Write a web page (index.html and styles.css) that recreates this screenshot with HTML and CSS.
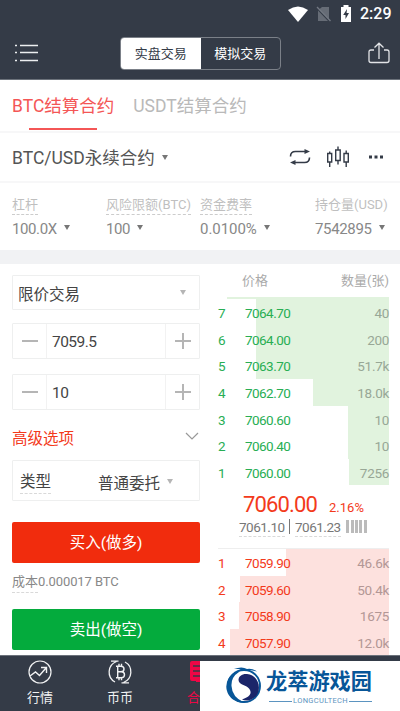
FILE: index.html
```html
<!DOCTYPE html>
<html lang="zh-CN">
<head>
<meta charset="utf-8">
<title>BTC/USD永续合约</title>
<link rel="stylesheet" href="styles.css">
</head>
<body>
<div class="app">
  <header class="header">
    <div class="status">
      <svg width="20" height="16" viewBox="0 0 20 16"><path d="M0 4Q10-3 20 4L10 16Z" fill="#fff"/></svg>
      <svg width="16" height="16" viewBox="0 0 16 16"><path d="M6 1h7v12.500L3 3.500ZM2 4.500l10 10.500H2Z" fill="#666c76"/><path d="M1 1l13.500 14" stroke="#737983" stroke-width="1.300"/></svg>
      <svg width="12" height="17" viewBox="0 0 12 17"><path d="M3.500 0h5v2H11v15H1V2h2.500Z" fill="#fff"/><path d="M7 4L3.200 10H5.500V14L9 8H6.600Z" fill="#343b47"/></svg>
      <span class="clock">2:29</span>
    </div>
    <div class="navbar">
      <svg width="24" height="18" viewBox="0 0 24 18" stroke="#eceef0" stroke-width="1.300"><path d="M0 1.500h2M5 1.500h18M0 8.500h2M5 8.500h18M0 16.500h2M5 16.500h18"/></svg>
      <div class="segment"><span class="seg on">实盘交易</span><span class="seg">模拟交易</span></div>
      <svg width="22" height="22" viewBox="0 0 22 22" fill="none" stroke="#e2e4e7" stroke-width="1.300"><path d="M6 8H3Q1 8 1 10v8.500q0 2 2 2h16q2 0 2-2V10q0-2-2-2h-3M11 17V1.500M6.500 5.500L11 1.200l4.500 4.300"/></svg>
    </div>
  </header>

  <nav class="tabs"><span class="tab active">BTC结算合约</span><span class="tab">USDT结算合约</span></nav>

  <section class="pair">
    <span class="pair-name">BTC/USD永续合约</span><i class="caret small"></i>
    <div class="tools">
      <svg width="22" height="18" viewBox="0 0 22 18" fill="none" stroke="#343b47" stroke-width="1.600"><path d="M1.500 8.500Q1.500 3.500 6.500 3.500H17M20.500 9.500Q20.500 14.500 15.500 14.500H5"/><path d="M15.500 1L21 3.500l-5.500 2.500ZM6.500 12L1 14.500 6.500 17Z" fill="#343b47" stroke="none"/></svg>
      <svg width="22" height="22" viewBox="0 0 22 22" fill="none" stroke="#343b47" stroke-width="1.400"><path d="M.7 7.500h4v8.500h-4ZM8.700 4h4.500v10.500H8.700ZM17 7.500h4.300v8.500H17ZM2.700 5.500v2M2.700 16v5M11 .5V4M11 14.500v4M19.200 4.500v3M19.200 16v5"/></svg>
      <svg width="14" height="4" viewBox="0 0 14 4" fill="#343b47"><path d="M0 .5h3v3H0ZM5.500 .5h3v3h-3ZM11 .5h3v3h-3Z"/></svg>
    </div>
  </section>

  <section class="info">
    <div class="cell"><span class="label dash">杠杆</span><div class="value">100.0X<i class="caret"></i></div></div>
    <div class="cell"><span class="label dash">风险限额(BTC)</span><div class="value">100<i class="caret"></i></div></div>
    <div class="cell"><span class="label dash">资金费率</span><div class="value">0.0100%<i class="caret"></i></div></div>
    <div class="cell"><span class="label">持仓量(USD)</span><div class="value">7542895<i class="caret"></i></div></div>
  </section>

  <main class="trade">
    <div class="form">
      <div class="select">限价交易<i class="caret light"></i></div>
      <div class="stepper price"><span class="step minus"></span><span class="num">7059.5</span><span class="step plus"></span></div>
      <div class="stepper amount"><span class="step minus"></span><span class="num">10</span><span class="step plus"></span></div>
      <div class="advanced">高级选项<svg width="14" height="9" viewBox="0 0 14 9" fill="none" stroke="#999" stroke-width="1.200"><path d="M1 1l6 6 6-6"/></svg></div>
      <div class="type"><span class="type-label dash">类型</span><span class="type-value">普通委托</span><i class="caret light"></i></div>
      <div class="btn buy">买入(做多)</div>
      <div class="cost"><span class="dash">成本</span><span class="cost-num">0.000017 BTC</span></div>
      <div class="btn sell">卖出(做空)</div>
    </div>

    <div class="book">
      <div class="book-head"><span>价格</span><span>数量(张)</span></div>
      <div class="asks">
        <div class="row"><b>7</b><span>7064.70</span><em class="w133">40</em></div>
        <div class="row"><b>6</b><span>7064.00</span><em class="w133">200</em></div>
        <div class="row"><b>5</b><span>7063.70</span><em class="w133">51.7k</em></div>
        <div class="row"><b>4</b><span>7062.70</span><em class="w76">18.0k</em></div>
        <div class="row"><b>3</b><span>7060.60</span><em class="w41">10</em></div>
        <div class="row"><b>2</b><span>7060.40</span><em class="w41">10</em></div>
        <div class="row"><b>1</b><span>7060.00</span><em class="w40">7256</em></div>
      </div>
      <div class="last"><span class="last-price">7060.00</span><span class="change">2.16%</span></div>
      <div class="marks"><span class="dash">7061.10</span><i class="sep"></i><span class="dash">7061.23</span><i class="bars"></i></div>
      <div class="bids">
        <div class="row"><b>1</b><span>7059.90</span><em class="w103">46.6k</em></div>
        <div class="row"><b>2</b><span>7059.60</span><em class="w149">50.4k</em></div>
        <div class="row"><b>3</b><span>7058.90</span><em class="w150">1675</em></div>
        <div class="row"><b>4</b><span>7057.90</span><em class="w159">12.0k</em></div>
      </div>
    </div>
  </main>

  <footer class="tabbar">
    <div class="item"><svg width="24" height="24" viewBox="0 0 24 24" fill="none" stroke="#f1f2f3" stroke-width="1.200"><circle cx="12" cy="12" r="11"/><path d="M2 16l5.500-4 4 3.500L18 8M13 7.500h5.500V13" stroke-width="1.400"/></svg><span>行情</span></div>
    <div class="item"><svg width="26" height="24" viewBox="0 0 26 24" fill="none" stroke="#f1f2f3" stroke-width="1.300"><path d="M11.500 1.200H4M9.500 1.500A11.300 11.300 0 0 0 8 22M14.500 22.800H22M16.500 22.500A11.300 11.300 0 0 0 18 2"/><path d="M9 6.200h5q3 0 3 2.800t-3 2.800h-3.500M14.200 11.800q3.300 0 3.300 3t-3.300 3H9M10.700 6v12M12 3.800V6M14.500 3.800V6M12 18v2.300M14.500 18v2.300" stroke-width="1.400"/></svg><span>币币</span></div>
    <div class="item current"><svg width="22" height="24" viewBox="0 0 22 24"><path d="M3 1h16v18q0 3-3 3H7v-1H3q-2 0-2-2V3q0-2 2-2Z" fill="#ed0746"/><path d="M4 6h12M4 11h12M4 16h12" stroke="#343b47" stroke-width="1.300"/></svg><span>合约</span></div>
  </footer>

  <aside class="brand">
    <svg class="brand-logo" width="36" height="38" viewBox="0 0 36 38"><circle cx="18" cy="20" r="16" fill="none" stroke="#075698" stroke-width="1.900"/><path d="M11 5.500A16 16 0 0 0 18 36.500Q6 31 5.500 20 5 11 13 6Z" fill="#075698"/><path d="M8 3q8-3 13 0 5-1 10 2.500l-7-1.500q-7 0-13 1.500l4-2.500Z" fill="#075698"/><path d="M21 8C34 9 37 27 27 32.500c-4 2.500-8 2.500-11 1 7-2 11-6 7-11-3-4-10-3-10.500-8.500 0-4 4-6.500 8.500-6Z" fill="#1b2569"/></svg>
    <div class="brand-text"><div class="brand-name">龙萃游戏园</div><div class="brand-sub"><span>LONGCULTECH</span></div></div>
  </aside>
</div>
</body>
</html>
```
FILE: styles.css
```css
* { box-sizing: border-box; }
body { margin: 0; background: #fff; }
i, em, b { font-style: normal; font-weight: 400; }
svg { display: block; flex: none; }
.app {
  position: relative;
  width: 400px;
  height: 711px;
  overflow: hidden;
  font-family: Roboto, "Noto Sans CJK SC", sans-serif;
  color: #444;
  white-space: nowrap;
}

.header { height: 80px; background: #343b47; border-bottom: 1px solid #6c727b; }
.status { height: 27px; display: flex; align-items: center; justify-content: flex-end; padding: 0 9px 0 0; color: #fff; }
.status svg + svg { margin-left: 7px; }
.status svg:nth-child(3) { margin-left: 8px; }
.clock { width: 31px; margin-left: 8px; font-size: 16px; font-weight: 500; line-height: 27px; }
.status svg:first-child { margin-right: 1px; }
.navbar { height: 52px; display: flex; align-items: center; padding: 0 10px 0 15px; }
.segment { display: flex; width: 161px; height: 33px; margin: 0 auto 0 81px; border: 1px solid #7b8088; border-radius: 4px; overflow: hidden; }
.seg { flex: 1; text-align: center; font-size: 13px; line-height: 32px; color: #fff; }
.seg.on { background: #fff; color: #343b47; }

.tabs { height: 53px; display: flex; gap: 19px; padding: 0 12px; border-bottom: 2px solid #f7f7f8; }
.tab { position: relative; font-size: 17.500px; line-height: 52px; color: #b9b9b9; }
.tab.active { color: #f45656; }
.tab.active::after { content: ""; position: absolute; left: 17px; top: 48px; width: 68px; height: 2px; background: #f45656; }

.pair { height: 50px; display: flex; align-items: center; padding: 0 17px 0 12px; border-bottom: 2px solid #f7f7f8; }
.pair-name { font-size: 17.500px; line-height: 50px; padding-top: 2px; color: #555; }
.tools { margin-left: auto; display: flex; align-items: center; gap: 16px; }
.tools svg:last-child { margin-left: 4px; }

.caret { display: inline-block; flex: none; width: 0; height: 0; border: 3.500px solid transparent; border-top: 5px solid #777; border-bottom: 0; }
.caret.small { margin-left: 7px; }
.caret.light { border-top-color: #b5b5b5; }
.dash { border-bottom: 1px dashed #d9d9d9; }

.info { height: 67px; display: grid; grid-template-columns: 94px 94px 115px 1fr; padding: 11px 0 0 12px; }
.label { display: inline-block; height: 20px; font-size: 13px; line-height: 20px; color: #bfbfbf; }
.label.dash { border-color: #ccc; }
.value { display: flex; align-items: center; height: 20px; margin-top: 4px; font-size: 15px; line-height: 20px; letter-spacing: -.4px; color: #888; }
.value .caret { margin: -3px 0 0 7px; }
.cell { line-height: 20px; }
.cell:nth-child(3) .value { letter-spacing: -.05px; }
.cell:last-child .value { letter-spacing: -.35px; }

.trade { height: 405px; padding-left: 12px; display: flex; border-top: 14px solid #f1f2f4; }
.form { width: 188px; padding-top: 11px; }
.select, .stepper, .type { border: 1px solid #eeefef; border-radius: 1px; display: flex; align-items: center; }
.select { height: 35px; justify-content: space-between; padding: 0 13px 0 5px; font-size: 15.500px; }
.stepper { height: 36px; }
.price { margin-top: 13px; }
.amount { margin-top: 15px; }
.step { width: 33px; height: 34px; display: grid; place-items: center; }
.step::before, .step::after { content: ""; grid-area: 1 / 1; background: #b5b5b5; }
.step::before { width: 16px; height: 2px; }
.step.plus::after { width: 2px; height: 16px; }
.num { flex: 1; padding-left: 5px; border: solid #f2f2f2; border-width: 0 1px; font-size: 15.500px; line-height: 37px; height: 34px; letter-spacing: -.55px; }
.advanced { height: 50px; display: flex; align-items: center; justify-content: space-between; padding: 3px 1px 0 0; font-size: 15.500px; color: #f33a1b; }
.type { height: 41px; padding: 2px 0 0 7px; font-size: 15.500px; }
.type-label { line-height: 24px; height: 24px; }
.type-value { margin-left: 47px; }
.type .caret { margin-left: 7px; }
.btn { height: 41px; border-radius: 2px; color: #fff; font-size: 15.500px; line-height: 43px; text-align: center; }
.buy { margin-top: 21px; background: #f12c0d; }
.sell { background: #04ab3d; }
.cost { height: 46px; padding-top: 8px; font-size: 13px; line-height: 22px; color: #888; }
.cost .dash { display: inline-block; line-height: 22px; height: 22px; }
.cost-num { letter-spacing: -.1px; }

.book { width: 171px; margin-left: 18px; }
.book-head { height: 33px; display: flex; justify-content: space-between; padding-left: 24px; font-size: 13px; line-height: 34px; color: #aaa; }
.asks { border-top: 2px solid #e1f3de; margin-left: 9px; }
.asks .row { margin-left: -9px; }
.row { display: grid; grid-template-columns: 1fr; height: 26.650px; line-height: 29px; font-size: 13.500px; }
.row > * { grid-area: 1 / 1; }
.row b, .row span { z-index: 1; }
.row span { padding-left: 27px; letter-spacing: -.55px; }
.row em { justify-self: end; text-align: right; height: 26.650px; letter-spacing: -.3px; }
.asks b, .asks span { color: #28ae54; }
.bids b, .bids span { color: #f33a1b; }
.asks em { background: #e1f3de; color: #98a796; }
.bids em { background: #fde1de; color: #b39795; }
.w133 { width: 133px; }
.w76 { width: 76px; }
.w41 { width: 41px; }
.w40 { width: 40px; }
.w103 { width: 103px; }
.w149 { width: 149px; }
.w150 { width: 150px; }
.w159 { width: 159px; }
.last { height: 33px; display: flex; align-items: baseline; padding-left: 25px; color: #f33a1b; }
.last-price { font-size: 22px; line-height: 39px; letter-spacing: -.85px; }
.change { margin-left: 12px; font-size: 13px; }
.marks { height: 29.400px; display: flex; align-items: flex-start; padding-left: 21px; font-size: 13.500px; line-height: 19px; letter-spacing: -.5px; color: #777; }
.marks .dash { height: 19px; width: 46px; }
.sep { width: 1px; height: 15px; margin: 1px 5px 0 4px; background: #777; }
.bars { width: 22px; height: 13px; margin: 2px 0 0 5px; background: repeating-linear-gradient(90deg, #bbb 0 3px, #fff 3px 4.500px); }
.bids { border-top: 1px solid #eee; }

.tabbar { height: 56px; display: grid; grid-template-columns: repeat(5, 80px); background: #343b47; border-top: 1px solid #6c727b; }
.item { display: flex; flex-direction: column; align-items: center; padding-top: 4px; font-size: 13px; line-height: 28px; color: #f1f2f3; }
.item.current { color: #ed0746; }

.brand { position: absolute; left: 200px; top: 661px; width: 200px; height: 50px; padding: 5px 0 0 26px; display: flex; background: #fff; color: #075698; }
.brand-text { width: 107px; margin-left: 4px; }
.brand-name { font-size: 21.200px; font-weight: 700; line-height: 31px; }
.brand-sub { display: flex; align-items: center; gap: 1px; padding: 0 1px 0 3px; font-size: 7.500px; line-height: 8px; letter-spacing: .35px; color: #5b94c0; }
.brand-sub::before, .brand-sub::after { content: ""; flex: 1; height: 1px; background: #5b94c0; }
```
